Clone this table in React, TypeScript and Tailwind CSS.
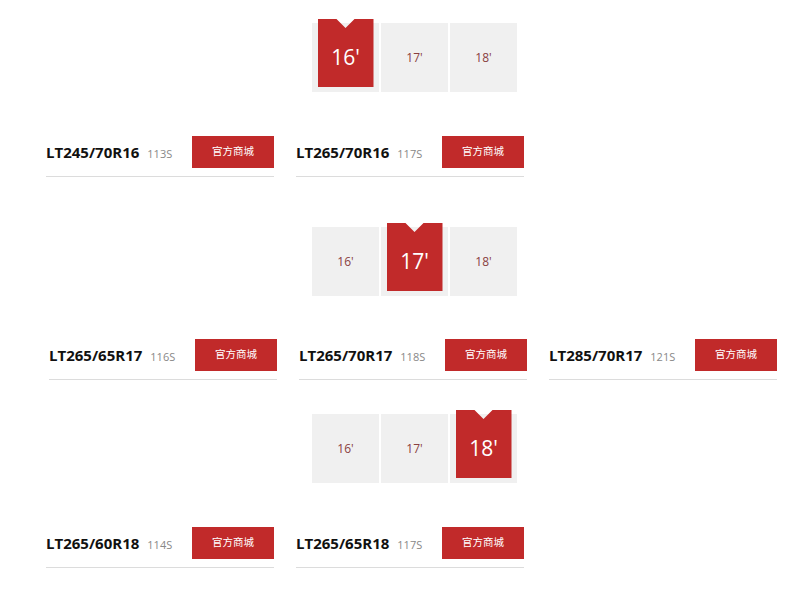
import React from 'react';

type Tire = { size: string; load: string };

const sections: { active: number; tabsTop: string; rowTop: string; rowLeft: string; tires: Tire[] }[] = [
  {
    active: 0,
    tabsTop: 'mt-[19px]',
    rowTop: 'mt-[44px]',
    rowLeft: 'ml-[46px]',
    tires: [
      { size: 'LT245/70R16', load: '113S' },
      { size: 'LT265/70R16', load: '117S' },
    ],
  },
  {
    active: 1,
    tabsTop: 'mt-[46px]',
    rowTop: 'mt-[43px]',
    rowLeft: 'ml-[49px]',
    tires: [
      { size: 'LT265/65R17', load: '116S' },
      { size: 'LT265/70R17', load: '118S' },
      { size: 'LT285/70R17', load: '121S' },
    ],
  },
  {
    active: 2,
    tabsTop: 'mt-[30px]',
    rowTop: 'mt-[44px]',
    rowLeft: 'ml-[46px]',
    tires: [
      { size: 'LT265/60R18', load: '114S' },
      { size: 'LT265/65R18', load: '117S' },
    ],
  },
];

const rims = ["16'", "17'", "18'"];

function RimTabs({ active }: { active: number }) {
  return (
    <div className="ml-[312px] flex items-start gap-[2px] pt-[4px]">
      {rims.map((rim, i) => (
        <div key={rim} className="flex h-[69px] w-[67px] justify-center bg-[#f0f0f0]">
          {i === active ? (
            <div className="-mt-[4px] flex h-[68px] w-[56px] items-center justify-center bg-[#c12a2a] pt-[10px] text-[21px] text-white [clip-path:polygon(0_0,19px_0,28px_9px,37px_0,100%_0,100%_100%,0_100%)]">
              {rim}
            </div>
          ) : (
            <div className="flex h-full items-center text-[12px] text-[#8a4040]">{rim}</div>
          )}
        </div>
      ))}
    </div>
  );
}

function TireRow({ tire }: { tire: Tire }) {
  return (
    <div className="flex w-[228px] items-center justify-between border-b border-[#dcdcdc] pb-[8px]">
      <div className="flex items-baseline gap-[8px]">
        <span className="text-[15px] font-bold text-[#111]">{tire.size}</span>
        <span className="text-[11px] text-[#888]">{tire.load}</span>
      </div>
      <button
        type="button"
        className="flex h-[32px] w-[82px] items-center justify-center bg-[#c12a2a] text-[10.5px] text-white"
      >
        官方商城
      </button>
    </div>
  );
}

export default function App() {
  return (
    <div
      className="h-[600px] w-[800px] overflow-hidden bg-white"
      style={{ fontFamily: '"Open Sans", "Noto Sans CJK SC", sans-serif' }}
    >
      {sections.map((section, idx) => (
        <div key={idx} className={section.tabsTop}>
          <RimTabs active={section.active} />
          <div className={`${section.rowTop} ${section.rowLeft} flex gap-[22px]`}>
            {section.tires.map((tire) => (
              <TireRow key={tire.size} tire={tire} />
            ))}
          </div>
        </div>
      ))}
    </div>
  );
}
